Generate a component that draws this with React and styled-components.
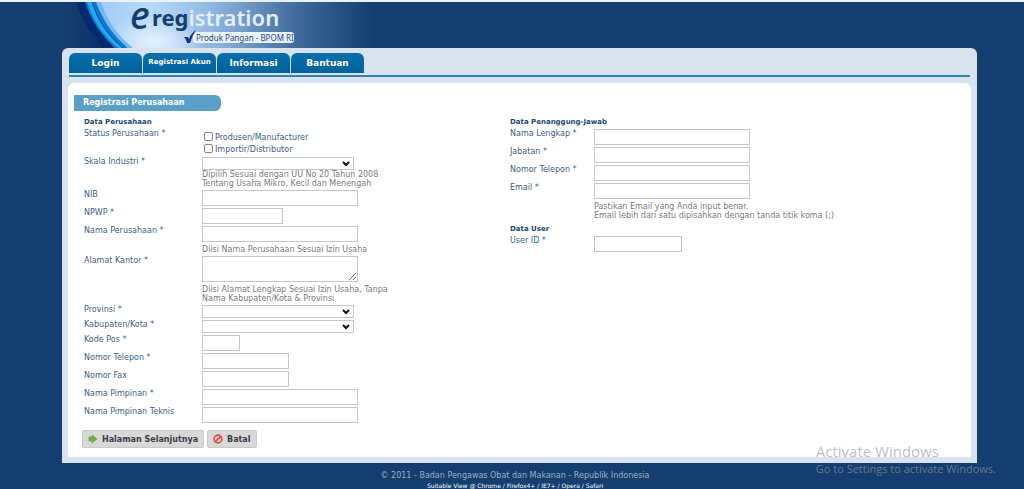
import React from "react";
import styled, { createGlobalStyle } from "styled-components";

const Global = createGlobalStyle`
  * { box-sizing: border-box; }
  html { background: #153f70; }
  body {
    margin: 0;
    font-family: "DejaVu Sans", Verdana, sans-serif;
    font-size: 8px;
    line-height: 9px;
    color: #3d6086;
    overflow-x: hidden;
  }
`;

const Page = styled.div`
  position: relative;
  min-height: 100vh;
  border-top: 2px solid #eef2f5;
  background: #153f70;
`;

const Shell = styled.div`
  margin: 0 47px 0 62px;
`;

const Banner = styled.header`
  position: relative;
  height: 46px;
  padding: 0 0 0 68px;
`;

const BannerArt = styled.svg`
  position: absolute;
  left: 0;
  top: 0;
  display: block;
`;

const Brand = styled.div`
  position: relative;
  display: flex;
  align-items: flex-start;
  height: 30px;
  font-family: "Noto Sans", "Open Sans", sans-serif;
  font-size: 22px;
  font-weight: 600;
  line-height: 31px;
  color: #e6eef8;
`;

const BrandInitial = styled.span`
  width: 22px;
  font-size: 38px;
  font-style: italic;
  font-weight: 500;
  line-height: 25px;
  color: #173d6e;
`;

const BrandStrong = styled.span`
  font-weight: 700;
  color: #173d6e;
`;

const Tagline = styled.div`
  position: relative;
  display: flex;
  width: 101px;
  height: 11px;
  margin-left: 63px;
  padding-left: 3px;
  border-radius: 3px;
  background: #e9f1fa;
  font-family: "Noto Sans", "Open Sans", sans-serif;
  font-size: 8px;
  line-height: 11px;
  color: #23497a;
  white-space: nowrap;
`;

const TagMark = styled.svg`
  position: absolute;
  left: -10px;
  top: -3px;
`;

const Frame = styled.div`
  padding: 5px 6px 6px;
  border-radius: 6px 6px 0 0;
  background: #d9e3ef;
`;

const Tabs = styled.nav`
  display: flex;
  gap: 1px;
  margin: 0 1px;
  padding-bottom: 2px;
  border-bottom: 2px solid #2f86b3;
`;

const Tab = styled.a`
  width: 73px;
  height: 20px;
  border-radius: 6px 6px 0 0;
  background: linear-gradient(#046fab, #03629b);
  color: #fff;
  font-size: ${(p) => (p.$small ? 7 : 9)}px;
  font-weight: 700;
  line-height: ${(p) => (p.$small ? 18 : 20)}px;
  text-align: center;
  text-decoration: none;
  white-space: nowrap;
`;

const Panel = styled.main`
  margin-top: 6px;
  padding: 12px 6px 9px;
  border-radius: 6px 6px 0 0;
  background: #fff;
`;

const PanelTitle = styled.h1`
  width: 147px;
  margin: 0 0 6px;
  padding-left: 9px;
  border-radius: 0 6px 6px 0;
  background: #599fc7;
  color: #fff;
  font-size: 8px;
  line-height: 16px;
`;

const Columns = styled.div`
  display: grid;
  grid-template-columns: 426px 1fr;
  padding-left: 10px;
`;

const Group = styled.section`
  display: flex;
  flex-direction: column;
  gap: 2px;
  & + & { margin-top: 4px; }
`;

const GroupTitle = styled.h2`
  margin: 0;
  color: #1d4872;
  font-size: 7px;
  line-height: 10px;
`;

const Row = styled.div`
  display: grid;
  grid-template-columns: ${(p) => (p.$narrow ? 84 : 118)}px 1fr;
`;

const Label = styled.label`
  line-height: 10px;
`;

const Control = styled.div`
  display: flex;
  flex-direction: column;
  align-items: flex-start;
`;

const TextBox = styled.input`
  width: ${(p) => p.$width || 156}px;
  height: 16px;
  padding: 0 2px;
  border: 1px solid #c6c6c6;
  background: #fff;
  font: inherit;
`;

const Area = styled.textarea`
  display: block;
  width: 156px;
  height: 26px;
  padding: 1px 2px;
  border: 1px solid #c6c6c6;
  font: inherit;
`;

const SelectWrap = styled.div`
  position: relative;
  display: flex;
`;

const Select = styled.select`
  appearance: none;
  width: 152px;
  height: 13px;
  padding: 0 16px 0 2px;
  border: 1px solid #c6c6c6;
  border-radius: 0;
  background: #fff;
  font: inherit;
`;

const Chevron = styled.svg`
  position: absolute;
  right: 4px;
  top: 4px;
  pointer-events: none;
`;

const Hint = styled.p`
  margin: ${(p) => (p.$tight ? 0 : 3)}px 0 0;
  color: #7a7a7a;
  white-space: pre;
`;

const CheckList = styled.div`
  padding: 1px 0;
`;

const CheckLabel = styled.label`
  display: flex;
  align-items: center;
  gap: 2px;
  height: 12px;
  padding-left: 2px;
  line-height: 12px;
`;

const Check = styled.input`
  appearance: none;
  width: 9px;
  height: 9px;
  margin: 0;
  border: 1px solid #858585;
  border-radius: 2px;
  background: #fff;
  &:checked { background: #0075ff; }
`;

const CheckText = styled.span`
  padding-top: 3px;
`;

const Actions = styled.div`
  display: flex;
  gap: 3px;
  margin-top: 7px;
  padding-left: 8px;
`;

const Button = styled.button`
  display: flex;
  align-items: center;
  gap: 4px;
  height: 18px;
  padding: 0 5px;
  border: 1px solid #c9c9c9;
  border-radius: 2px;
  background: #d8d8d8;
  color: #3d3d46;
  font-family: inherit;
  font-size: 8px;
  font-weight: 700;
  white-space: nowrap;
`;

const Footer = styled.footer`
  padding: 8px 0 0 6px;
  color: #9fb0bd;
  font-size: 8px;
  line-height: 10px;
  text-align: center;
`;

const Support = styled.div`
  color: #fff;
  font-size: 6px;
`;

const Watermark = styled.div`
  position: absolute;
  right: 28px;
  bottom: 14px;
  color: rgba(150, 155, 160, 0.65);
  font-family: "Open Sans", "Noto Sans", sans-serif;
  font-size: 11px;
  line-height: 16px;
  pointer-events: none;
`;

const WatermarkTitle = styled.div`
  font-size: 15px;
  line-height: 19px;
`;

function Field({ id, label, width, narrow, hint }) {
  return (
    <Row $narrow={narrow}>
      <Label htmlFor={id}>{label}</Label>
      <Control>
        <TextBox id={id} type="text" $width={width} />
        {hint && <Hint>{hint}</Hint>}
      </Control>
    </Row>
  );
}

function SelectField({ id, label, hint }) {
  return (
    <Row>
      <Label htmlFor={id}>{label}</Label>
      <Control>
        <SelectWrap>
          <Select id={id} defaultValue="">
            <option value="" />
          </Select>
          <Chevron width="8" height="6" viewBox="0 0 8 6">
            <path d="M1 1 L4 4 L7 1" fill="none" stroke="#111" strokeWidth="2" />
          </Chevron>
        </SelectWrap>
        {hint && <Hint $tight>{hint}</Hint>}
      </Control>
    </Row>
  );
}

export default function App() {
  return (
    <Page>
      <Global />
      <Shell>
        <Banner>
          <BannerArt width="310" height="46" viewBox="0 0 310 46" aria-hidden="true">
            <defs>
              <linearGradient id="sky" x1="0" x2="1" y1="0" y2="0">
                <stop offset="0" stopColor="#9cc9f3" />
                <stop offset="0.22" stopColor="#b9dafa" />
                <stop offset="0.45" stopColor="#8db4de" />
                <stop offset="0.75" stopColor="#3d6798" />
                <stop offset="1" stopColor="#153f70" />
              </linearGradient>
              <linearGradient id="shade" x1="0" x2="1" y1="0" y2="0">
                <stop offset="0" stopColor="#153f70" />
                <stop offset="1" stopColor="#0b2f6b" />
              </linearGradient>
              <radialGradient id="glow">
                <stop offset="0" stopColor="#e2f0ff" />
                <stop offset="1" stopColor="#e2f0ff" stopOpacity="0" />
              </radialGradient>
            </defs>
            <path d="M26 0 H310 V46 H62 Q38 26 26 0Z" fill="url(#sky)" />
            <ellipse cx="92" cy="40" rx="52" ry="26" fill="url(#glow)" />
            <path d="M0 0 H18 Q26 26 46 46 H0Z" fill="url(#shade)" />
            <path d="M14 0 H24 Q32 26 52 46 H42 Q22 26 14 0Z" fill="#052a70" />
            <path d="M23 0 H36 Q44 26 66 46 H54 Q32 28 23 0Z" fill="#0a78d2" />
            <path d="M25 0 H30 Q38 27 60 46 H56 Q34 28 25 0Z" fill="#20a9f6" />
            <path d="M34 0 H39 Q48 28 71 46 H66 Q44 28 34 0Z" fill="#73b7ee" />
            <path d="M30 0 Q38 27 61 46" fill="none" stroke="#064f9f" />
          </BannerArt>
          <Brand>
            <BrandInitial>e</BrandInitial>
            <BrandStrong>reg</BrandStrong>
            <span>istration</span>
          </Brand>
          <Tagline>
            <TagMark width="14" height="16" viewBox="0 0 14 16" aria-hidden="true">
              <path d="M1 8 L5 8 L6 10 Q8 4 13 1 Q9 7 7 14 L4 14 Q3 10 1 8Z" fill="#162f87" />
            </TagMark>
            Produk Pangan - BPOM RI
          </Tagline>
        </Banner>

        <Frame>
          <Tabs>
            <Tab href="#login">Login</Tab>
            <Tab href="#registrasi" $small>Registrasi Akun</Tab>
            <Tab href="#informasi">Informasi</Tab>
            <Tab href="#bantuan">Bantuan</Tab>
          </Tabs>

          <Panel>
            <PanelTitle>Registrasi Perusahaan</PanelTitle>
            <form>
              <Columns>
                <Group>
                  <GroupTitle>Data Perusahaan</GroupTitle>
                  <Row role="group" aria-labelledby="status">
                    <Label as="span" id="status">Status Perusahaan *</Label>
                    <CheckList>
                      <CheckLabel>
                        <Check type="checkbox" />
                        <CheckText>Produsen/Manufacturer</CheckText>
                      </CheckLabel>
                      <CheckLabel>
                        <Check type="checkbox" />
                        <CheckText>Importir/Distributor</CheckText>
                      </CheckLabel>
                    </CheckList>
                  </Row>
                  <SelectField
                    id="skala"
                    label="Skala Industri *"
                    hint={"Dipilih Sesuai dengan UU No 20 Tahun 2008\nTentang Usaha Mikro, Kecil dan Menengah"}
                  />
                  <Field id="nib" label="NIB" />
                  <Field id="npwp" label="NPWP *" width={81} />
                  <Field id="nama" label="Nama Perusahaan *" hint="Diisi Nama Perusahaan Sesuai Izin Usaha" />
                  <Row>
                    <Label htmlFor="alamat">Alamat Kantor *</Label>
                    <Control>
                      <Area id="alamat" />
                      <Hint>{"Diisi Alamat Lengkap Sesuai Izin Usaha, Tanpa\nNama Kabupaten/Kota & Provinsi"}</Hint>
                    </Control>
                  </Row>
                  <SelectField id="provinsi" label="Provinsi *" />
                  <SelectField id="kabupaten" label="Kabupaten/Kota *" />
                  <Field id="kodepos" label="Kode Pos *" width={38} />
                  <Field id="telepon" label="Nomor Telepon *" width={87} />
                  <Field id="fax" label="Nomor Fax" width={87} />
                  <Field id="pimpinan" label="Nama Pimpinan *" />
                  <Field id="teknis" label="Nama Pimpinan Teknis" />
                </Group>

                <div>
                  <Group>
                    <GroupTitle>Data Penanggung-Jawab</GroupTitle>
                    <Field narrow id="pj-nama" label="Nama Lengkap *" />
                    <Field narrow id="pj-jabatan" label="Jabatan *" />
                    <Field narrow id="pj-telepon" label="Nomor Telepon *" />
                    <Field
                      narrow
                      id="pj-email"
                      label="Email *"
                      hint={"Pastikan Email yang Anda input benar.\nEmail lebih dari satu dipisahkan dengan tanda titik koma (;)"}
                    />
                  </Group>
                  <Group>
                    <GroupTitle>Data User</GroupTitle>
                    <Field narrow id="user" label="User ID *" width={88} />
                  </Group>
                </div>
              </Columns>

              <Actions>
                <Button type="submit">
                  <svg width="10" height="10" viewBox="0 0 10 10" aria-hidden="true">
                    <path d="M1 3 H4 V1 L9 5 L4 9 V7 H1Z" fill="#6db33f" stroke="#5aa032" strokeWidth="0.6" strokeLinejoin="round" />
                  </svg>
                  Halaman Selanjutnya
                </Button>
                <Button type="button">
                  <svg width="10" height="10" viewBox="0 0 10 10" aria-hidden="true">
                    <circle cx="5" cy="5" r="3.9" fill="#f0cfcd" stroke="#d4504d" strokeWidth="1.6" />
                    <path d="M2.4 7.6 L7.6 2.4" stroke="#d4504d" strokeWidth="1.6" />
                  </svg>
                  Batal
                </Button>
              </Actions>
            </form>
          </Panel>
        </Frame>
      </Shell>

      <Footer>
        <div>© 2011 - Badan Pengawas Obat dan Makanan - Republik Indonesia</div>
        <Support>Suitable View @ Chrome / Firefox4+ / IE7+ / Opera / Safari</Support>
      </Footer>

      <Watermark>
        <WatermarkTitle>Activate Windows</WatermarkTitle>
        <div>Go to Settings to activate Windows.</div>
      </Watermark>
    </Page>
  );
}
